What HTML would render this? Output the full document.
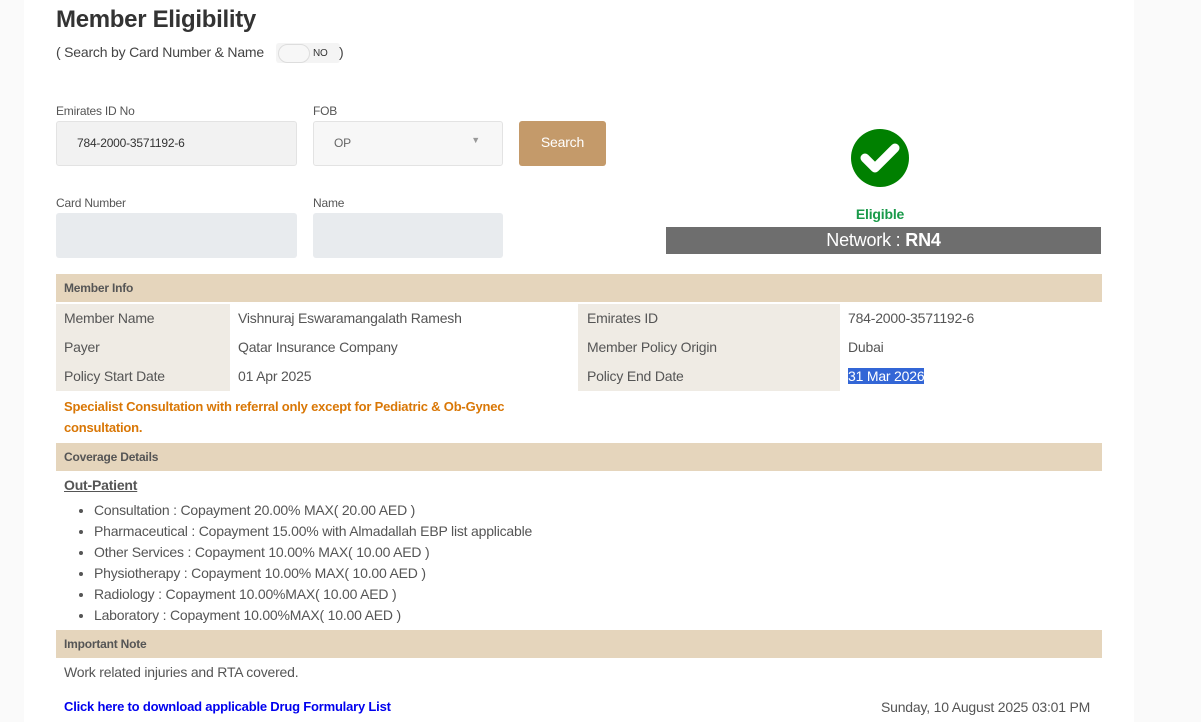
<!DOCTYPE html>
<html><head><style>
body{margin:0;width:1201px;height:722px;background:#fafafa;font-family:"Liberation Sans",sans-serif;color:#555;overflow:hidden;position:relative;letter-spacing:-0.2px}
.card{position:absolute;left:24px;top:0;width:1110px;height:722px;background:#fff}
.a{position:absolute}
h1{position:absolute;left:56px;top:6px;margin:0;font-size:24px;font-weight:bold;color:#333;letter-spacing:-0.3px}
.lbl{font-size:12px;color:#555}
.inp{border:1px solid #e3e3e3;border-radius:3px;box-sizing:border-box;font-size:12px;color:#333}
.hdr{background:#e5d5bc;font-size:12px;font-weight:bold;color:#555;padding-left:8px;box-sizing:border-box;line-height:29px}
.row{font-size:14px;color:#555;line-height:29px}
.lc{background:#efebe4}
ul{margin:0;padding-left:38px;font-size:14px;line-height:21px;color:#555}
</style></head><body>
<div class="card"></div>
<h1>Member Eligibility</h1>
<div class="a" style="left:56px;top:44px;font-size:14px;color:#444">( Search by Card Number &amp; Name</div>
<div class="a" style="left:276px;top:43px;width:64px;height:20px;background:#f4f4f4;border-radius:3px"></div>
<div class="a" style="left:278px;top:44px;width:30px;height:17px;border:1px solid #ddd;border-radius:10px;background:#f7f7f7"></div>
<div class="a" style="left:313px;top:48px;font-size:10px;color:#333">NO</div>
<div class="a" style="left:339px;top:44px;font-size:14px;color:#444">)</div>

<div class="a lbl" style="left:56px;top:104px">Emirates ID No</div>
<div class="a inp" style="left:56px;top:121px;width:241px;height:45px;background:#f2f2f2;padding:14px 0 0 20px">784-2000-3571192-6</div>
<div class="a lbl" style="left:313px;top:104px">FOB</div>
<div class="a inp" style="left:313px;top:121px;width:190px;height:45px;background:#f7f7f7;padding:14px 0 0 20px;color:#666">OP<span style="position:absolute;right:22px;top:13px;font-size:9px;color:#999">&#9660;</span></div>
<div class="a" style="left:519px;top:121px;width:87px;height:45px;background:#c49a6a;border-radius:3px;color:#fff;font-size:14px;text-align:center;line-height:43px">Search</div>

<div class="a lbl" style="left:56px;top:196px">Card Number</div>
<div class="a" style="left:56px;top:213px;width:241px;height:45px;background:#e8ebee;border-radius:3px"></div>
<div class="a lbl" style="left:313px;top:196px">Name</div>
<div class="a" style="left:313px;top:213px;width:190px;height:45px;background:#e8ebee;border-radius:3px"></div>

<svg class="a" style="left:851px;top:129px" width="58" height="58" viewBox="0 0 58 58"><circle cx="29" cy="29" r="29" fill="#008000"/><path d="M14 29 L24 39 L44 19" stroke="#fff" stroke-width="9" fill="none" stroke-linecap="round" stroke-linejoin="round"/></svg>
<div class="a" style="left:666px;top:206px;width:428px;text-align:center;font-size:14px;font-weight:bold;color:#1a9a4a">Eligible</div>
<div class="a" style="left:666px;top:227px;width:435px;height:27px;background:#6e6e6e;color:#fff;text-align:center;font-size:18px;line-height:27px">Network : <b>RN4</b></div>

<div class="a hdr" style="left:56px;top:274px;width:1046px;height:28px">Member Info</div>
<div class="a lc" style="left:56px;top:304px;width:174px;height:87px"></div>
<div class="a lc" style="left:578px;top:304px;width:262px;height:87px"></div>
<div class="a row" style="left:64px;top:304px">Member Name<br>Payer<br>Policy Start Date</div>
<div class="a row" style="left:238px;top:304px">Vishnuraj Eswaramangalath Ramesh<br>Qatar Insurance Company<br>01 Apr 2025</div>
<div class="a row" style="left:587px;top:304px">Emirates ID<br>Member Policy Origin<br>Policy End Date</div>
<div class="a row" style="left:848px;top:304px">784-2000-3571192-6<br>Dubai<br><span style="background:#3366d6;color:#fff">31 Mar 2026</span></div>
<div class="a" style="left:64px;top:396px;width:480px;font-size:13px;font-weight:bold;color:#d97706;line-height:21px">Specialist Consultation with referral only except for Pediatric &amp; Ob-Gynec consultation.</div>

<div class="a hdr" style="left:56px;top:443px;width:1046px;height:28px">Coverage Details</div>
<div class="a" style="left:64px;top:477px;font-size:14px;font-weight:bold;text-decoration:underline;color:#555">Out-Patient</div>
<ul class="a" style="left:56px;top:500px">
<li>Consultation : Copayment 20.00% MAX( 20.00 AED )</li>
<li>Pharmaceutical : Copayment 15.00% with Almadallah EBP list applicable</li>
<li>Other Services : Copayment 10.00% MAX( 10.00 AED )</li>
<li>Physiotherapy : Copayment 10.00% MAX( 10.00 AED )</li>
<li>Radiology : Copayment 10.00%MAX( 10.00 AED )</li>
<li>Laboratory : Copayment 10.00%MAX( 10.00 AED )</li>
</ul>
<div class="a hdr" style="left:56px;top:630px;width:1046px;height:28px">Important Note</div>
<div class="a" style="left:64px;top:664px;font-size:14px">Work related injuries and RTA covered.</div>
<div class="a" style="left:64px;top:699px;font-size:13px;font-weight:bold;color:#0000ee">Click here to download applicable Drug Formulary List</div>
<div class="a" style="left:881px;top:699px;font-size:14px">Sunday, 10 August 2025 03:01 PM</div>
</body></html>
